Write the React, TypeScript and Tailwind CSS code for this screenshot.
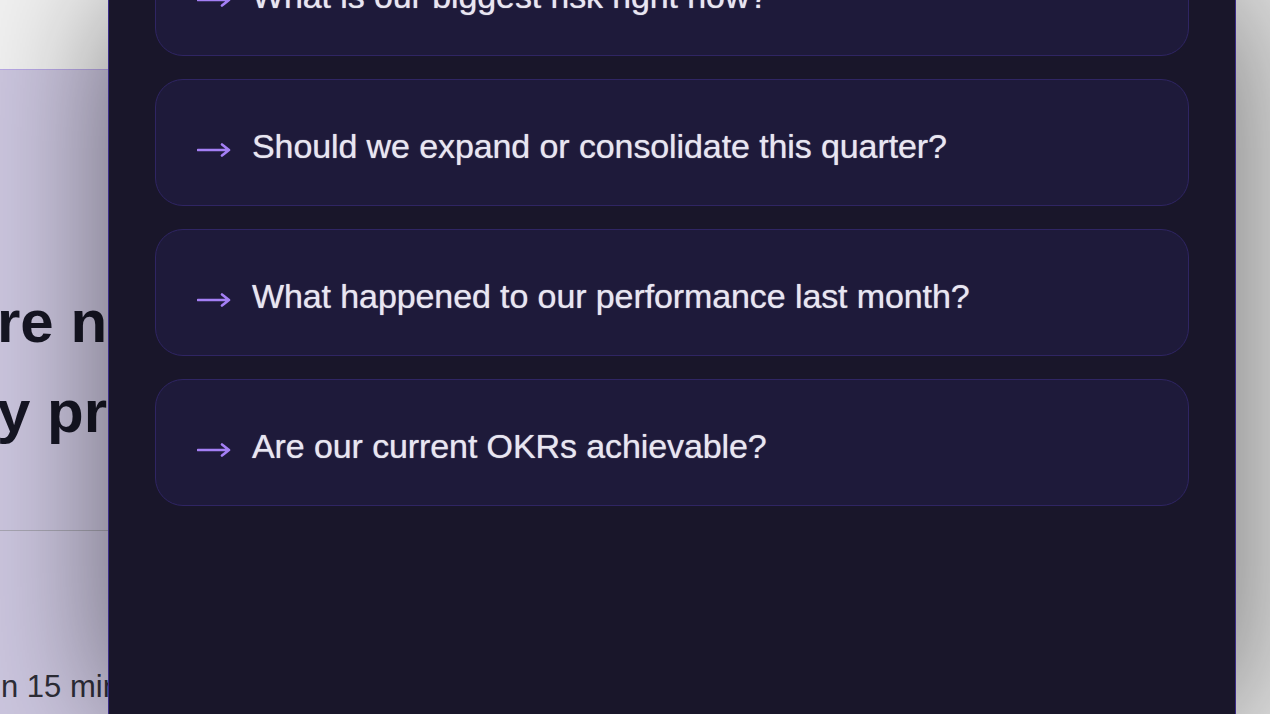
import React from 'react';

const QUESTIONS = [
  'What is our biggest risk right now?',
  'Should we expand or consolidate this quarter?',
  'What happened to our performance last month?',
  'Are our current OKRs achievable?',
];

function Arrow() {
  return (
    <svg width="34" height="16" viewBox="0 0 34 16" fill="none" className="shrink-0 mt-[7px]">
      <path d="M1 8h31M25 2.5L32 8l-7 5.5" stroke="#a47ff5" strokeWidth="2.6" strokeLinecap="round" strokeLinejoin="round" />
    </svg>
  );
}

export default function App() {
  return (
    <div className="w-[1270px] h-[714px] overflow-hidden flex bg-[#e6e6e6]" style={{ fontFamily: '"Liberation Sans", Arial, sans-serif' }}>
      {/* Page behind the drawer */}
      <div className="w-[108px] shrink-0 flex flex-col overflow-hidden">
        <div className="h-[70px] bg-[#f2f2f2] border-b border-[#b9a9e6]" />
        <div className="flex-1 flex flex-col bg-[#cdc7e0] whitespace-nowrap">
          <div className="mt-[207px] ml-[-3px] text-[60px] leading-[90px] font-bold text-[#161624]">
            <div>re now</div>
            <div>y proof</div>
          </div>
          <div className="mt-[73px] h-px bg-[#a9a7b4]" />
          <div className="mt-[133px] ml-[1px] text-[31px] text-[#2e2e38]">n 15 min</div>
        </div>
      </div>

      {/* Drawer */}
      <div className="relative z-10 w-[1128px] shrink-0 bg-[#19162a] border-x border-[#3a2b86] shadow-[0_0_130px_rgba(0,0,0,0.5)] px-[46px]">
        <div className="mt-[-71px] flex flex-col gap-[23px]">
          {QUESTIONS.map(q => (
            <button
              key={q}
              className="h-[127px] w-full flex items-center gap-[21px] pl-[41px] pt-[8px] rounded-[28px] bg-[#1e1a3a] border border-[#2f2563] text-left"
            >
              <Arrow />
              <span className="text-[34px] text-[#e8e6f1] tracking-[-0.1px] [text-shadow:0_0_1px_rgba(232,230,241,0.8)]">{q}</span>
            </button>
          ))}
        </div>
      </div>

      <div className="flex-1 bg-[#e2e2e2]" />
    </div>
  );
}
